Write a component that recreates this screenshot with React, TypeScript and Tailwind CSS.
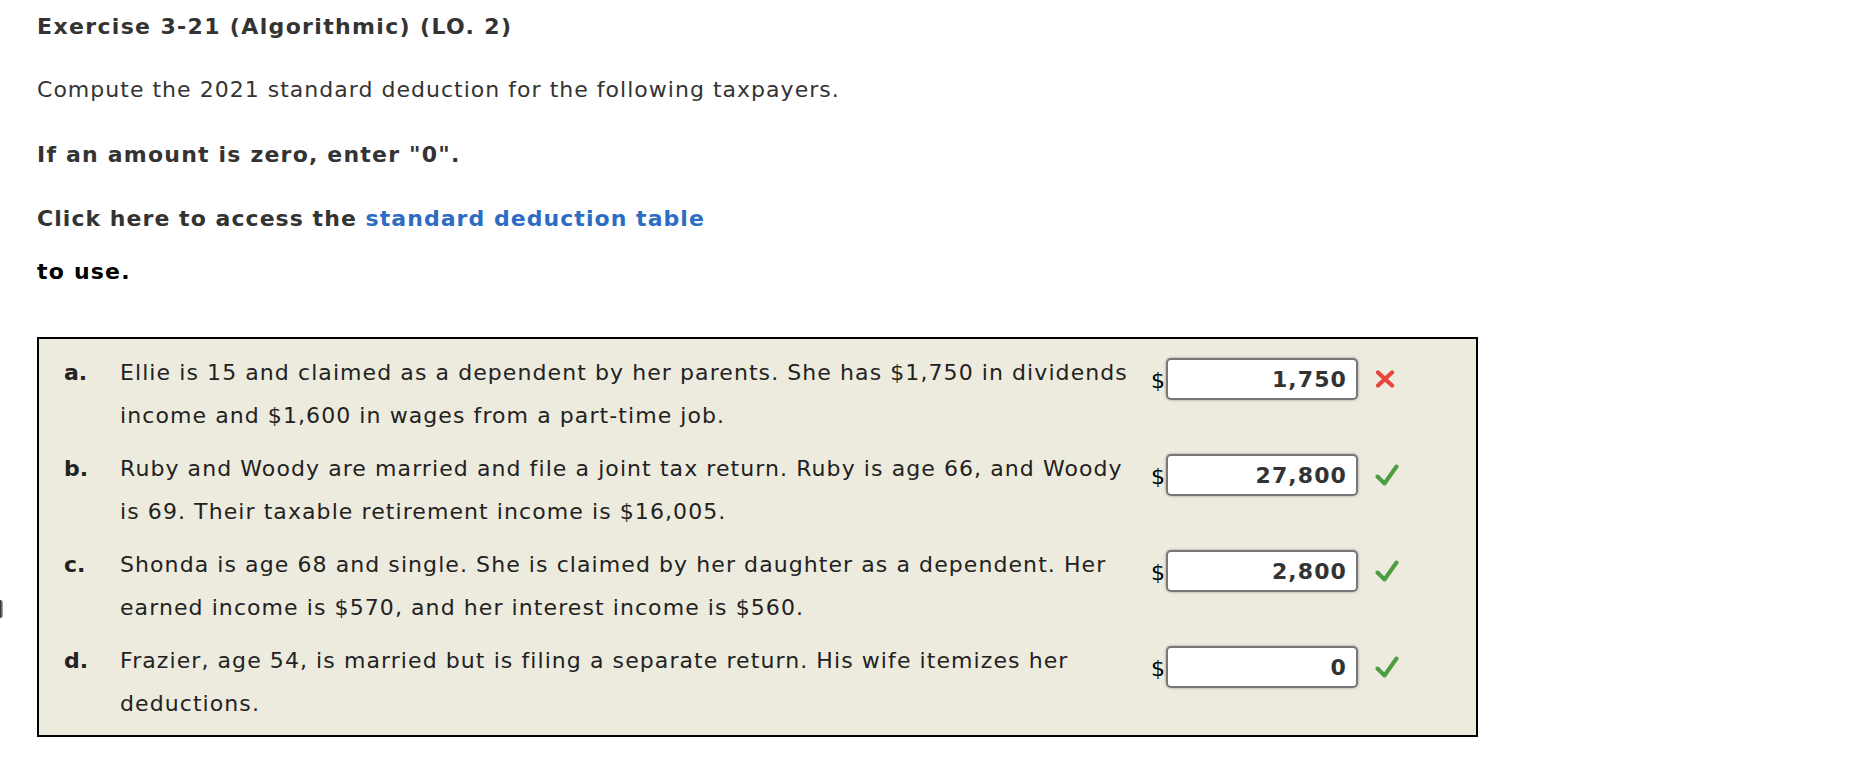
const items = [
  {
    letter: 'a.',
    lines: [
      'Ellie is 15 and claimed as a dependent by her parents. She has $1,750 in dividends',
      'income and $1,600 in wages from a part-time job.',
    ],
    value: '1,750',
    correct: false,
  },
  {
    letter: 'b.',
    lines: [
      'Ruby and Woody are married and file a joint tax return. Ruby is age 66, and Woody',
      'is 69. Their taxable retirement income is $16,005.',
    ],
    value: '27,800',
    correct: true,
  },
  {
    letter: 'c.',
    lines: [
      'Shonda is age 68 and single. She is claimed by her daughter as a dependent. Her',
      'earned income is $570, and her interest income is $560.',
    ],
    value: '2,800',
    correct: true,
  },
  {
    letter: 'd.',
    lines: [
      'Frazier, age 54, is married but is filing a separate return. His wife itemizes her',
      'deductions.',
    ],
    value: '0',
    correct: true,
  },
]

function CheckMark() {
  return (
    <svg width="24" height="24" viewBox="0 0 24 24">
      <path d="M2.5 13.5 L9.5 20.5 L21.5 3.5" fill="none" stroke="#4a9e3f" strokeWidth="4" strokeLinecap="round" strokeLinejoin="round" />
    </svg>
  )
}

function CrossMark() {
  return (
    <svg width="20" height="18" viewBox="0 0 20 18">
      <path d="M3 2.5 L17 15.5 M17 2.5 L3 15.5" fill="none" stroke="#e8453c" strokeWidth="4.2" strokeLinecap="round" />
    </svg>
  )
}

export default function App() {
  return (
    <div className="relative min-h-[781px] w-[1870px] bg-white font-['DejaVu_Sans',Verdana,sans-serif] text-[#333]">
      {/* stray edge mark from the page behind */}
      <div className="absolute left-0 top-[600px] h-[18px] w-[3px] rounded-r-full bg-gradient-to-r from-[#222] to-[#bbb]" />

      <div className="pl-[37px] pt-[12px]">
        <h1 className="text-[22px] font-bold leading-[30px] tracking-[1.35px]">Exercise 3-21 (Algorithmic) (LO. 2)</h1>
        <p className="mt-[33px] text-[22px] leading-[30px] tracking-[1.02px]">Compute the 2021 standard deduction for the following taxpayers.</p>
        <p className="mt-[35px] text-[22px] font-bold leading-[30px] tracking-[1.2px]">If an amount is zero, enter "0".</p>
        <p className="mt-[34px] text-[22px] font-bold leading-[30px] tracking-[1.05px]">
          Click here to access the <span className="text-[#2c6cc3]">standard deduction table</span>
        </p>
        <p className="mt-[23px] text-[22px] font-bold leading-[30px] tracking-[1.2px] text-black">to use.</p>

        <div className="mt-[50px] w-[1441px] border-2 border-black bg-[#edebde] pb-[10px] pt-[12px]">
          <div className="flex flex-col gap-[10px]">
            {items.map((item) => (
              <div key={item.letter} className="flex h-[86px]">
                <div className="w-[81px] pl-[25px] text-[22px] font-bold leading-[43px] text-[#222]">{item.letter}</div>
                <div className="w-[1031px] text-[22px] leading-[43px] tracking-[1.08px] text-[#222]">
                  {item.lines.map((l) => (
                    <div key={l} className="whitespace-nowrap">{l}</div>
                  ))}
                </div>
                <div className="mt-[7px] flex h-[42px] items-end">
                  <span className="pb-[6px] text-[22px] leading-[26px] text-black">$</span>
                  <div className="ml-[1px] flex h-[42px] w-[192px] items-center justify-end rounded-[5px] border-2 border-[#777] bg-white pr-[9px] text-[22px] font-bold tracking-[1.1px] text-[#333] shadow-[0_0_3px_rgba(0,0,0,0.35)]">
                    {item.value}
                  </div>
                  <div className="flex h-[42px] w-[60px] items-center pl-[17px]">
                    {item.correct ? <CheckMark /> : <CrossMark />}
                  </div>
                </div>
              </div>
            ))}
          </div>
        </div>
      </div>
    </div>
  )
}
